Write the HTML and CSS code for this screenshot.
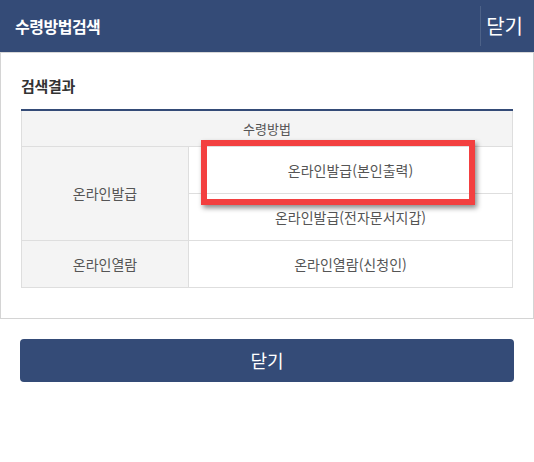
FILE: index.html
```html
<!DOCTYPE html>
<html lang="ko">
<head>
<meta charset="utf-8">
<link rel="stylesheet" href="styles.css">
</head>
<body>
<header class="topbar">
  <h1 class="title">수령방법검색</h1>
  <button class="close-top" type="button">닫기</button>
</header>
<section class="panel">
  <h2 class="sub">검색결과</h2>
  <div class="table-wrap">
    <table class="result">
      <thead>
        <tr><th colspan="2">수령방법</th></tr>
      </thead>
      <tbody>
        <tr><th rowspan="2" class="rowhead">온라인발급</th><td>온라인발급(본인출력)</td></tr>
        <tr><td>온라인발급(전자문서지갑)</td></tr>
        <tr><th class="rowhead">온라인열람</th><td>온라인열람(신청인)</td></tr>
      </tbody>
    </table>
    <div class="highlight"></div>
  </div>
</section>
<div class="actions">
  <button class="close-btn" type="button">닫기</button>
</div>
</body>
</html>
```

FILE: styles.css
```css
* { box-sizing: border-box; }
body {
  margin: 0;
  background: #fff;
  font-family: "Noto Sans CJK KR", "Noto Sans", sans-serif;
  color: #444;
}
.topbar {
  height: 52px;
  background: #344b77;
  display: flex;
  align-items: center;
  justify-content: space-between;
  padding-left: 15px;
}
.title {
  margin: 0;
  font-size: 16px;
  font-weight: 700;
  color: #fff;
  letter-spacing: -0.5px;
}
.close-top {
  height: 40px;
  border: 0;
  border-left: 1px solid #4d6288;
  background: transparent;
  color: #fff;
  font-family: inherit;
  font-size: 20px;
  padding: 0 11px 0 5px;
  line-height: 40px;
}
.panel {
  border: 1px solid #d4d4d4;
  border-top: 1px solid #d8d8d8;
  padding: 22px 20px 30px 20px;
}
.sub {
  margin: 0 0 12px 0;
  font-size: 15px;
  line-height: 22px;
  font-weight: 700;
  color: #333;
  letter-spacing: -0.3px;
}
.table-wrap {
  position: relative;
}
.result {
  width: 100%;
  border-collapse: collapse;
  border-top: 2px solid #344b77;
  font-size: 14px;
  color: #555;
}
.result th, .result td {
  border: 1px solid #dedede;
  font-weight: 400;
  text-align: center;
  padding: 0;
}
.result thead th {
  height: 36px;
  background: #f4f4f4;
  font-size: 13px;
}
.result tbody td, .result tbody th {
  height: 47px;
}
.result .rowhead {
  width: 167px;
  background: #f4f4f4;
}
.highlight {
  position: absolute;
  left: 180px;
  top: 31px;
  width: 274px;
  height: 65px;
  border: 6px solid #f34040;
  box-shadow: 2px 3px 5px rgba(0, 0, 0, 0.45);
}
.actions {
  padding: 20px 20px 0 20px;
}
.close-btn {
  width: 100%;
  height: 43px;
  border: 0;
  border-radius: 4px;
  background: #344b77;
  color: #fff;
  font-family: inherit;
  font-size: 18px;
}
```
